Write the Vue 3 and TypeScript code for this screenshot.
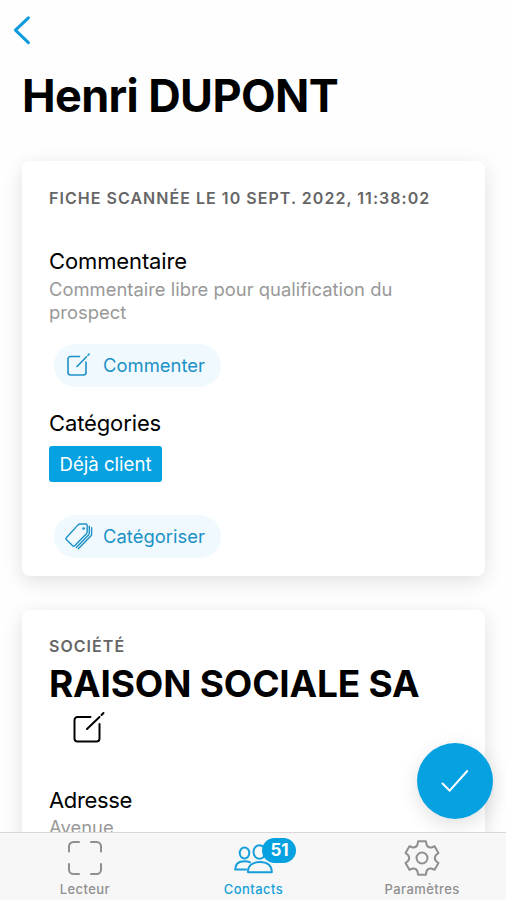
<script setup lang="ts">
const contact = {
  name: 'Henri DUPONT',
  scanned: 'FICHE SCANNÉE LE 10 SEPT. 2022, 11:38:02',
  company: 'RAISON SOCIALE SA',
  unread: 51,
}

// Outline of the six-toothed settings wheel, centred on the origin.
function gearOutline(): string {
  const at = (radius: number, degrees: number): string => {
    const a = (degrees * Math.PI) / 180
    return `${(radius * Math.sin(a)).toFixed(2)} ${(-radius * Math.cos(a)).toFixed(2)}`
  }
  let d = ''
  for (let i = 0; i < 6; i++) {
    const c = i * 60
    d += `${i === 0 ? 'M' : 'L'}${at(14, c - 19)} L${at(17.2, c - 13)} L${at(17.2, c + 13)} L${at(14, c + 19)} Q${at(11.8, c + 30)} ${at(14, c + 41)} `
  }
  return d + 'Z'
}
const gear = gearOutline()
</script>

<template>
  <div class="screen">
    <main class="content">
      <button class="back" aria-label="Retour">
        <svg width="18" height="30" viewBox="0 0 18 30"><path d="M16.4 2.8 3.4 15.2 16.4 27.6" /></svg>
      </button>
      <h1 class="name">{{ contact.name }}</h1>

      <section class="card scan">
        <h2 class="overline scanned">{{ contact.scanned }}</h2>
        <h3 class="label">Commentaire</h3>
        <p class="hint">Commentaire libre pour qualification du prospect</p>
        <button class="pill comment">
          <svg width="26" height="26" viewBox="0 0 26 26">
            <path d="M13.5 4.5H4.500a2.500 2.500 0 0 0-2.500 2.500V20.500a2.500 2.500 0 0 0 2.500 2.500H17.500a2.500 2.500 0 0 0 2.500-2.500V10M11 14.500 20.500 4.800M22 3.200 23.200 2" />
          </svg>
          <span>Commenter</span>
        </button>
        <h3 class="label categories">Catégories</h3>
        <span class="chip">Déjà client</span>
        <button class="pill categorize">
          <svg class="tags" width="30" height="28" viewBox="0 0 30 28">
            <path d="M1.300 15.700 12.800 3.100q1-1.100 2.400-1.100h5.600q1.400 0 1.400 1.400v6.400q0 1.200-.8 2L9.700 23.800q-1 1-2 0L1.300 17.600q-.9-.9 0-1.900Z" />
            <path d="M24.300 4.200v6.800q0 1-.8 1.900L11.400 25.600M26.600 5.800v6.400q0 1-.8 1.900L13.400 26.800" />
            <circle class="hole" cx="18.600" cy="6.500" r="1.300" />
          </svg>
          <span>Catégoriser</span>
        </button>
      </section>

      <section class="card company">
        <h2 class="overline">SOCIÉTÉ</h2>
        <p class="company-name">{{ contact.company }}</p>
        <svg class="edit" width="34" height="34" viewBox="0 0 34 34">
          <path d="M18.500 6H5.500a3 3 0 0 0-3 3v18.500a3 3 0 0 0 3 3h19a3 3 0 0 0 3-3V13M15 18 27.500 6M29.500 4 31.500 2" />
        </svg>
        <h3 class="label">Adresse</h3>
        <p class="hint street">Avenue</p>
      </section>
    </main>

    <button class="fab" aria-label="Valider">
      <svg width="30" height="26" viewBox="0 0 30 26"><path d="M2.500 15.500 9.700 22.700 27.200 3" /></svg>
    </button>

    <nav class="tabs">
      <a class="tab">
        <svg width="36" height="36" viewBox="0 0 36 36">
          <path class="scan-frame" d="M2 11.500V6.500a4.500 4.500 0 0 1 4.500-4.500H12M24 2h5.500A4.500 4.500 0 0 1 34 6.500V11.500M34 24v5.500a4.500 4.500 0 0 1-4.500 4.500H24M12 34H6.500A4.500 4.500 0 0 1 2 29.500V24" />
        </svg>
        <span class="lecteur">Lecteur</span>
      </a>
      <a class="tab active">
        <span class="people">
          <svg width="40" height="36" viewBox="0 0 40 36">
            <ellipse cx="11.500" cy="13" rx="4.800" ry="5.500" />
            <path d="M13.500 29.500H2.200c0-5.500 3.800-8.300 9.300-8.300 2.200 0 4 .4 5.500 1.200" />
            <ellipse cx="26.500" cy="12" rx="6" ry="6.800" />
            <path d="M15 32.200c-.2-6.700 4.800-10.200 12-10.200s12 3.500 11.800 10.200Z" />
          </svg>
          <b class="badge">{{ contact.unread }}</b>
        </span>
        <span class="contacts">Contacts</span>
      </a>
      <a class="tab">
        <svg width="36" height="36" viewBox="-18 -18 36 36">
          <path :d="gear" />
          <circle r="5.500" />
        </svg>
        <span class="parametres">Paramètres</span>
      </a>
    </nav>
  </div>
</template>

<style>
body {
  background: #fff;
}
</style>

<style scoped>
.screen {
  position: relative;
  display: flex;
  flex-direction: column;
  height: 100vh;
  overflow: hidden;
  background: #fefefe;
  font-family: Inter, 'Liberation Sans', sans-serif;
  color: #000;
}
svg {
  display: block;
  flex: none;
  fill: none;
  stroke: currentColor;
  stroke-width: 1.6;
  stroke-linecap: round;
  stroke-linejoin: round;
  overflow: visible;
}
button {
  margin: 0;
  padding: 0;
  border: 0;
  background: none;
  font: inherit;
}
h1, h2, h3, p {
  margin: 0;
}
.content {
  flex: 1;
  min-height: 0;
  overflow: hidden;
  padding: 15px 21px 0 22px;
}
.back {
  display: block;
  margin-left: -10px;
  color: #0f9bdb;
}
.back svg {
  stroke-width: 3;
}
.name {
  margin-top: 25px;
  font-size: 45px;
  line-height: 52px;
  font-weight: 700;
  letter-spacing: -0.62px;
  white-space: nowrap;
}
.card {
  border-radius: 8px;
  background: #fff;
  box-shadow: 0 5px 20px rgba(0, 0, 0, 0.12);
  padding: 0 27px;
}
.scan {
  display: flex;
  flex-direction: column;
  align-items: flex-start;
  height: 415px;
  margin-top: 39px;
}
.overline {
  font-size: 16px;
  line-height: 20px;
  font-weight: 600;
  letter-spacing: 1.04px;
  color: #666;
  white-space: nowrap;
}
.scanned {
  margin-top: 27px;
}
.label {
  font-size: 22px;
  line-height: 28px;
  font-weight: 400;
  letter-spacing: -0.12px;
}
.scanned + .label {
  margin-top: 39px;
}
.hint {
  font-size: 18.4px;
  line-height: 23px;
  letter-spacing: 0.01px;
  color: #999;
}
.scan .hint {
  margin-top: 3px;
}
.pill {
  display: flex;
  align-items: center;
  gap: 11px;
  width: 167px;
  height: 43px;
  margin-left: 5px;
  padding: 0 0 1px 12px;
  border-radius: 22px;
  background: #eff9fe;
  color: #1c91c7;
  font-size: 18.4px;
  letter-spacing: 0.02px;
}
.comment {
  margin-top: 20px;
}
.categories {
  margin-top: 22px;
}
.chip {
  margin-top: 9px;
  height: 36px;
  padding: 0 10.5px;
  border-radius: 3px;
  background: #05a1e1;
  color: #fff;
  font-size: 18.6px;
  line-height: 37px;
}
.categorize {
  gap: 8px;
  margin-top: 33px;
  padding-left: 11px;
}
.tags {
  stroke-width: 1.4;
}
.hole {
  fill: currentColor;
  stroke: none;
}
.company {
  height: 400px;
  margin-top: 34px;
}
.company .overline {
  padding-top: 26px;
}
.company-name {
  margin-top: 5px;
  font-size: 37px;
  line-height: 46px;
  font-weight: 700;
  letter-spacing: -0.18px;
  white-space: nowrap;
}
.edit {
  margin: 4px 0 0 23px;
  stroke-width: 2;
}
.company .label {
  margin-top: 41px;
  letter-spacing: -0.35px;
}
.street {
  margin-top: 1px;
  line-height: 24px;
}
.fab {
  position: absolute;
  left: 417px;
  top: 743px;
  display: grid;
  place-items: center;
  width: 76px;
  height: 76px;
  border-radius: 50%;
  background: #05a1e1;
  color: #fff;
  box-shadow: 0 6px 20px rgba(0, 0, 0, 0.12);
}
.fab svg {
  stroke-width: 2;
}
.tabs {
  position: relative;
  display: grid;
  grid-template-columns: repeat(3, 1fr);
  height: 67px;
  border-top: 1px solid #d8d8d8;
  background: #f7f7f7;
}
.tab {
  display: flex;
  flex-direction: column;
  align-items: center;
  padding: 7px 0 0 1px;
  color: #8f8f8f;
  font-size: 13px;
  line-height: 16px;
  font-weight: 500;
  letter-spacing: 0.42px;
}
.tab > span:last-child {
  margin-top: 5px;
}
.tab svg {
  stroke-width: 2;
}
.active {
  color: #169fda;
}
.people {
  position: relative;
}
.badge {
  position: absolute;
  left: 29px;
  top: -2px;
  width: 34px;
  height: 25px;
  border-radius: 13px;
  background: #05a1e1;
  color: #fff;
  font-size: 17px;
  line-height: 25px;
  font-weight: 700;
  letter-spacing: 0;
  text-align: center;
}
</style>
